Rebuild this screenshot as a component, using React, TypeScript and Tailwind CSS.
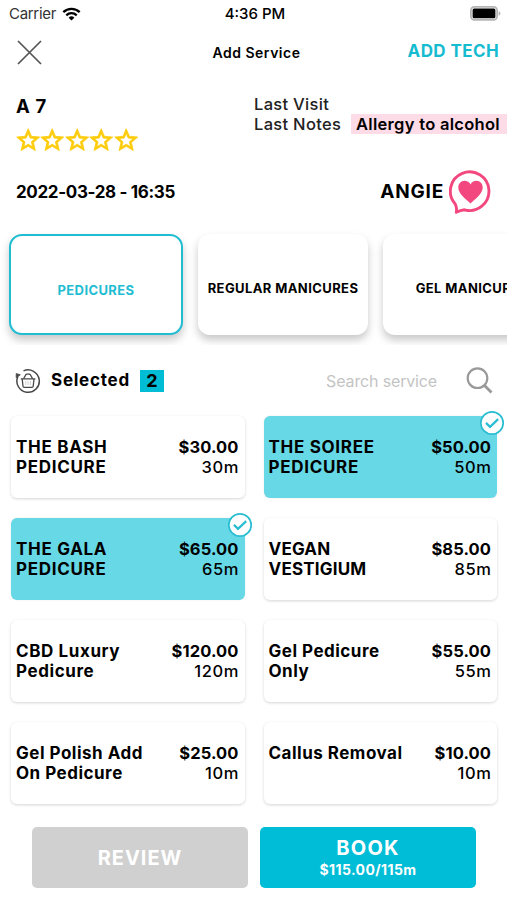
import React from 'react';
import clsx from 'clsx';

interface Service {
    name: string[];
    price: string;
    duration: string;
    selected?: boolean;
    tracking: string;
}

const SERVICES: Service[] = [
    { name: ['THE BASH', 'PEDICURE'], price: '$30.00', duration: '30m', tracking: 'tracking-[0.7px]' },
    { name: ['THE SOIREE', 'PEDICURE'], price: '$50.00', duration: '50m', selected: true, tracking: 'tracking-[0.7px]' },
    { name: ['THE GALA', 'PEDICURE'], price: '$65.00', duration: '65m', selected: true, tracking: 'tracking-[0.7px]' },
    { name: ['VEGAN', 'VESTIGIUM'], price: '$85.00', duration: '85m', tracking: 'tracking-[0.2px]' },
    { name: ['CBD Luxury', 'Pedicure'], price: '$120.00', duration: '120m', tracking: 'tracking-[0.6px]' },
    { name: ['Gel Pedicure', 'Only'], price: '$55.00', duration: '55m', tracking: 'tracking-[0.5px]' },
    { name: ['Gel Polish Add', 'On Pedicure'], price: '$25.00', duration: '10m', tracking: 'tracking-[0.5px]' },
    { name: ['Callus Removal'], price: '$10.00', duration: '10m', tracking: 'tracking-[0.5px]' },
];

function WifiIcon() {
    return (
        <svg width="19" height="14" viewBox="0 0 19 14" fill="none" stroke="#000" strokeWidth="2.3">
            <path d="M1.3 5.2a11.8 11.8 0 0 1 16.4 0" />
            <path d="M4.3 8.3a7.5 7.5 0 0 1 10.4 0" />
            <path d="M9.5 13.6 6.6 10.7a4.2 4.2 0 0 1 5.8 0z" fill="#000" stroke="none" />
        </svg>
    );
}

function BatteryIcon() {
    return (
        <svg width="31" height="15" viewBox="0 0 31 15">
            <rect x="0.9" y="0.9" width="26.2" height="13" rx="3.6" fill="#fff" stroke="#b5b5b5" strokeWidth="1.8" />
            <rect x="2.6" y="2.6" width="22.8" height="9.6" rx="1.5" fill="#000" />
            <path d="M28.6 5v4.8q1.8-.8 1.8-2.4T28.6 5z" fill="#b5b5b5" />
        </svg>
    );
}

function StarIcon() {
    return (
        <svg width="24.4" height="24" viewBox="1.4 1.4 21.2 20.8" fill="#fdcc0d">
            <path
                d="M22 9.24l-7.19-.62L12 2 9.19 8.63 2 9.24l5.46 4.73L5.82 21 12 17.27 18.18 21l-1.63-7.03L22 9.24zM12 15.4l-3.76 2.27 1-4.28-3.32-2.88 4.38-.38L12 6.1l1.71 4.04 4.38.38-3.32 2.88 1 4.28L12 15.4z"
                stroke="#fdcc0d"
                strokeWidth="0.7"
            />
        </svg>
    );
}

function HeartBubble() {
    return (
        <svg width="43" height="44" viewBox="0 0 43 44" fill="none">
            <path
                d="M6.2 34A19.3 19.3 0 1 1 15.500 39.800Q11.500 40.300 7.300 42.300Q8.200 37.800 6.200 34z"
                stroke="#f2487f"
                strokeWidth="2.9"
                strokeLinejoin="round"
            />
            <path
                d="M21.5 33.5C17 29.100 9.300 23.800 9.300 17.500c0-3.900 2.900-6.700 6.200-6.700 2.600 0 4.900 1.300 6 3.700 1.100-2.400 3.400-3.700 6-3.700 3.300 0 6.200 2.800 6.200 6.700 0 6.300-7.700 11.600-12.200 16z"
                fill="#f2487f"
            />
        </svg>
    );
}

function BasketIcon() {
    return (
        <svg width="26" height="26" viewBox="0 0 26 26" fill="none" stroke="#484848" strokeWidth="1.5">
            <path d="M8.5 2.9A11.2 11.2 0 1 1 2.9 8.500" />
            <path d="M1.200 9.800V5.600L5.300 6.800z" fill="#484848" strokeWidth="0.8" />
            <path d="M5.8 10.8h14.6M7.2 11l.8 7.3q.1 1.1 1.2 1.1h7.8q1.1 0 1.2-1.1L19 11" strokeWidth="1.3" />
            <path d="M8.6 10.6l2.6-4.5M17.6 10.6L15 6.1M11.2 6.1H15" strokeWidth="1.2" />
            <path d="M10.8 13v4M13.1 13v4M15.4 13v4" strokeWidth="0.8" stroke="#c4c4c4" />
        </svg>
    );
}

function CheckBadge() {
    return (
        <svg className="absolute -top-[6px] -right-[8px]" width="26" height="26" viewBox="0 0 26 26" fill="none" stroke="#2bbdd2">
            <circle cx="13" cy="13" r="11.2" fill="#fff" strokeWidth="1.7" />
            <path d="M7 12.9l4 4 8.2-7.8" strokeWidth="2.2" />
        </svg>
    );
}

function ServiceCard({ service }: { service: Service }) {
    return (
        <div
            className={clsx(
                'relative flex h-[82px] items-start justify-between rounded-[6px] px-[5px] pt-[21px] text-[16.5px] leading-[20.4px]',
                service.selected
                    ? 'bg-[#67d8e6] shadow-[0_0_2px_rgba(0,0,0,0.1)]'
                    : 'bg-white shadow-[0_1px_3px_rgba(0,0,0,0.17)]'
            )}
        >
            <div className={clsx('text-[17px] font-bold whitespace-nowrap', service.tracking)}>
                {service.name.map((line) => (
                    <div key={line}>{line}</div>
                ))}
            </div>
            <div className="pr-[1px] text-right">
                <div className="font-bold tracking-[0.1px]">{service.price}</div>
                <div className="-mr-[0.5px] font-medium tracking-[0.6px]">{service.duration}</div>
            </div>
            {service.selected && <CheckBadge />}
        </div>
    );
}

export default function App() {
    return (
        <div className="flex h-[900px] w-[507px] flex-col overflow-hidden bg-white font-['Inter',sans-serif] text-black">
            {/* Status bar */}
            <div className="grid h-[28px] grid-cols-3 items-center pr-[6px] pl-[9px] text-[15px]">
                <div className="flex items-center gap-[6px] text-[#333]">
                    <span className="tracking-[-0.3px]">Carrier</span>
                    <WifiIcon />
                </div>
                <span className="text-center font-medium">4:36 PM</span>
                <div className="-mt-[1px] flex justify-end"><BatteryIcon /></div>
            </div>

            {/* Header */}
            <div className="grid h-[48px] grid-cols-3 items-center pr-[8px] pl-[17px]">
                <svg width="25" height="25" viewBox="0 0 25 25" stroke="#555" strokeWidth="1.7">
                    <path d="M1 1l23 23M24 1L1 24" />
                </svg>
                <h1 className="pr-[3px] text-center text-[14px] font-semibold tracking-[0.5px] whitespace-nowrap">Add Service</h1>
                <button className="text-right text-[17px] font-bold tracking-[0.4px] whitespace-nowrap text-[#16bbd0]">ADD TECH</button>
            </div>

            {/* Client */}
            <div className="flex h-[88px] pt-[18px] pl-4">
                <div className="w-[238px]">
                    <div className="text-[18.5px] leading-[24px] font-bold tracking-[0.7px]">A 7</div>
                    <div className="flex pt-[10px]">
                        {[1, 2, 3, 4, 5].map((n) => <StarIcon key={n} />)}
                    </div>
                </div>
                <div className="shrink-0 text-[16.5px] leading-[20px] font-medium tracking-[0.3px] whitespace-nowrap text-[#222]">
                    <div>Last Visit</div>
                    <div className="flex">
                        <span className="w-[97px]">Last Notes</span>
                        <span className="w-[156px] bg-[#fddbe7] pl-[5px] font-semibold text-black">Allergy to alcohol</span>
                    </div>
                </div>
            </div>

            <div className="flex h-[56px] items-center justify-between pr-[15px] pl-4 font-bold">
                <span className="pt-[1px] text-[17px] tracking-[-0.35px]">2022-03-28 - 16:35</span>
                <div className="flex items-center gap-[5px]">
                    <span className="pt-[1px] text-[19px] tracking-[0.8px]">ANGIE</span>
                    <HeartBubble />
                </div>
            </div>

            {/* Categories */}
            <div className="flex h-[125px] gap-[15px] overflow-hidden pt-[14px] pl-[9px] text-[13px] font-bold tracking-[0.4px] whitespace-nowrap">
                <div className="flex h-[101px] w-[174px] shrink-0 items-center justify-center rounded-[13px] border-2 border-[#1fbdd2] bg-white pt-[13px] text-[#1fbdd2] shadow-[0_5px_9px_rgba(0,0,0,0.22)]">
                    PEDICURES
                </div>
                <div className="flex h-[101px] w-[170px] shrink-0 items-center justify-center rounded-[12px] bg-white pt-[8px] shadow-[0_5px_9px_rgba(0,0,0,0.22)]">
                    REGULAR MANICURES
                </div>
                <div className="flex h-[101px] w-[170px] shrink-0 items-center justify-center rounded-[12px] bg-white pt-[8px] pl-[8px] shadow-[0_5px_9px_rgba(0,0,0,0.22)]">
                    GEL MANICURES
                </div>
            </div>

            {/* Search */}
            <div className="flex h-[71px] items-center pr-[14px] pl-[15px]">
                <BasketIcon />
                <span className="ml-[10px] text-[17px] font-bold tracking-[0.75px]">Selected</span>
                <span className="ml-[10px] flex h-[22px] w-[24px] items-center justify-center bg-[#00bcd4] text-[18px] font-bold">2</span>
                <span className="ml-auto text-[16px] tracking-[-0.15px] text-[#c4c4c4]">Search service</span>
                <svg className="ml-[29px]" width="27" height="27" viewBox="0 0 27 27" fill="none" stroke="#999" strokeWidth="2.2">
                    <circle cx="11.5" cy="11.2" r="9.8" />
                    <path d="M18.5 18.5l7 7" strokeWidth="2.8" />
                </svg>
            </div>

            {/* Services */}
            <div className="grid grid-cols-2 gap-x-[19px] gap-y-[20px] pr-[10px] pl-[11px]">
                {SERVICES.map((service) => (
                    <ServiceCard key={service.name.join(' ')} service={service} />
                ))}
            </div>

            {/* Actions */}
            <div className="flex gap-3 pt-[23px] pl-[32px] text-white">
                <button className="h-[61px] w-[216px] rounded-[5px] bg-[#d0d0d0] text-[20px] font-bold tracking-[1px]">REVIEW</button>
                <button className="flex h-[61px] w-[216px] flex-col items-center justify-center rounded-[5px] bg-[#00bdd7] font-bold">
                    <span className="text-[20px] leading-[24px] tracking-[1.3px]">BOOK</span>
                    <span className="text-[14px] leading-[19px] tracking-[0.4px]">$115.00/115m</span>
                </button>
            </div>
        </div>
    );
}
